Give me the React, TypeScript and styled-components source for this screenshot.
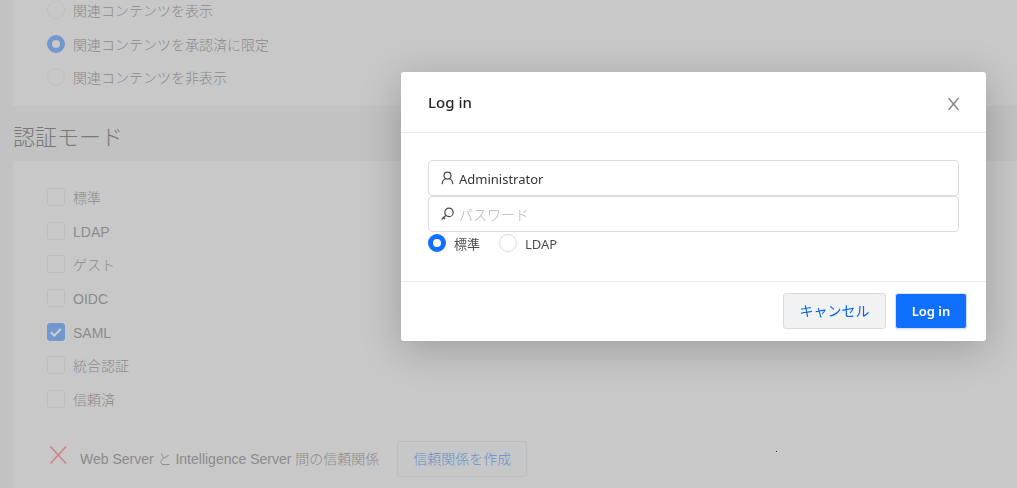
import React from "react";
import styled, { createGlobalStyle, css } from "styled-components";

const GlobalStyle = createGlobalStyle`
  *, *::before, *::after { box-sizing: border-box; }
  body {
    margin: 0;
    background: #c2c2c2;
    color: #8b8b8b;
    font-family: "Liberation Sans", "Noto Sans CJK JP", sans-serif;
    font-size: 14px;
    line-height: 20px;
  }
  button, input { font: inherit; }
`;

const Page = styled.main`
  min-height: 100vh;
  padding-left: 13px;
  overflow: hidden;
  display: flex;
  flex-direction: column;
`;

const Card = styled.section<{ $grow?: boolean }>`
  background: #c8c8c8;
  padding: ${(p) => (p.$grow ? "27px 34px 11px" : "1px 34px 20px")};
  flex: ${(p) => (p.$grow ? "1" : "none")};
`;

const Heading = styled.h2`
  margin: 0;
  height: 55px;
  padding-top: 16px;
  color: #76787b;
  font-size: 22px;
  font-weight: 300;
  line-height: 32px;
`;

const OptionList = styled.div<{ $height: number }>`
  display: grid;
  align-content: space-between;
  height: ${(p) => p.$height}px;
`;

const Option = styled.label<{ $gap?: number }>`
  display: flex;
  align-items: center;
  gap: ${(p) => p.$gap ?? 8}px;
  height: 18px;
`;

const OptionText = styled.span<{ $weight?: number }>`
  padding-top: 2px;
  font-weight: ${(p) => p.$weight ?? 300};
  white-space: nowrap;
`;

const Radio = styled.input<{ $muted?: boolean }>`
  appearance: none;
  flex: none;
  width: 18px;
  height: 18px;
  margin: 0;
  border: 1px solid ${(p) => (p.$muted ? "#bebebe" : "#dcdde0")};
  border-radius: 50%;
  &:checked {
    border: 5px solid ${(p) => (p.$muted ? "#7397cf" : "#0f6fff")};
  }
`;

const CheckFrame = styled.span`
  display: grid;
  flex: none;
  width: 18px;
  height: 18px;
  & > * { grid-area: 1 / 1; }
  svg { pointer-events: none; }
`;

const Checkbox = styled.input`
  appearance: none;
  width: 18px;
  height: 18px;
  margin: 0;
  border: 1px solid #bdbdbd;
  border-radius: 3px;
  &:checked {
    border-color: #7397cf;
    background: #7397cf;
  }
`;

const TrustRow = styled.div`
  display: flex;
  align-items: center;
  margin-top: 33px;
  white-space: nowrap;
`;

const TrustLabel = styled.span`
  margin: 0 18px 0 12px;
  font-weight: 300;
`;

const Speck = styled.span`
  width: 1px;
  height: 1px;
  margin: -16px 0 0 249px;
  background: #222222;
`;

const buttonKinds = {
  muted: css`
    width: 130px;
    color: #6c8fc8;
    background: #c6c7c8;
    border-color: #bdbdbe;
    font-weight: 300;
  `,
  plain: css`
    width: 103px;
    color: #0a64e6;
    background: #f1f2f4;
    border-color: #dadce0;
  `,
  primary: css`
    width: 72px;
    color: #ffffff;
    background: #0f6fff;
    border-color: #d3e2fa;
    font-size: 13px;
    font-weight: 600;
    box-shadow: 0 2px 2px rgba(0, 0, 0, 0.04);
  `,
};

const Button = styled.button<{ $kind: keyof typeof buttonKinds }>`
  height: 36px;
  padding: 0;
  border: 1px solid;
  border-radius: 3px;
  white-space: nowrap;
  cursor: pointer;
  ${(p) => buttonKinds[p.$kind]}
`;

const Overlay = styled.div`
  position: fixed;
  inset: 0;
  display: flex;
  justify-content: flex-end;
  align-items: flex-start;
  padding: 72px 31px;
`;

const Dialog = styled.form`
  width: 100%;
  max-width: 585px;
  border-radius: 3px;
  background: #ffffff;
  color: #4c4e52;
  font-family: "Noto Sans", "Noto Sans CJK JP", sans-serif;
  box-shadow: 0 8px 40px rgba(0, 0, 0, 0.22);
`;

const DialogHeader = styled.header`
  display: flex;
  align-items: center;
  justify-content: space-between;
  height: 61px;
  padding: 0 26px 0 27px;
  border-bottom: 1px solid #ebebec;
`;

const DialogTitle = styled.h1`
  margin: 0;
  color: #24262b;
  font-size: 15px;
  font-weight: 500;
`;

const CloseButton = styled.button`
  display: flex;
  padding: 0;
  margin-top: 4px;
  border: 0;
  background: none;
  color: #808287;
  cursor: pointer;
`;

const DialogBody = styled.div`
  padding: 27px 27px 29px;
`;

const Field = styled.label`
  display: flex;
  align-items: center;
  gap: 4px;
  height: 36px;
  padding: 0 12px;
  border: 1px solid #dcdde0;
  border-radius: 4px;
  color: #45474c;
  svg { flex: none; }
`;

const FieldInput = styled.input`
  flex: 1;
  min-width: 0;
  padding: 2px 0 0;
  border: 0;
  outline: 0;
  background: none;
  color: #35363c;
  font-size: 13px;
  &::placeholder {
    color: #b4b4b6;
    font-size: 14px;
    font-weight: 300;
    opacity: 1;
  }
`;

const ModeRow = styled.div`
  display: flex;
  gap: 19px;
  padding-top: 2px;
  font-size: 13px;
`;

const DialogFooter = styled.footer`
  display: flex;
  justify-content: flex-end;
  gap: 9px;
  padding: 11px 19px 12px;
  border-top: 1px solid #ebebec;
`;

const UserIcon = () => (
  <svg width="14" height="16" viewBox="0 0 14 16" fill="none" stroke="currentColor" strokeWidth="1.2" strokeLinecap="round" aria-hidden="true">
    <circle cx="6.5" cy="5.6" r="3.5" />
    <path d="M1.2 13.6C1.4 10.9 2.8 9.3 4.8 8.7M8.2 8.7C10.2 9.3 11.6 10.9 11.8 13.6" />
  </svg>
);

const KeyIcon = () => (
  <svg width="14" height="16" viewBox="0 0 14 16" fill="none" stroke="currentColor" strokeWidth="1.2" strokeLinecap="round" aria-hidden="true">
    <circle cx="8" cy="6.4" r="4.2" />
    <path d="M4.9 9.4L1.2 13M2.2 11.2L3.8 12.8" />
  </svg>
);

const contentOptions = [
  "関連コンテンツを表示",
  "関連コンテンツを承認済に限定",
  "関連コンテンツを非表示",
];

const authModes = ["標準", "LDAP", "ゲスト", "OIDC", "SAML", "統合認証", "信頼済"];

export default function App() {
  return (
    <>
      <GlobalStyle />
      <Page>
        <Card>
          <OptionList $height={85}>
            {contentOptions.map((text, i) => (
              <Option key={text}>
                <Radio $muted type="radio" name="content" defaultChecked={i === 1} />
                <OptionText>{text}</OptionText>
              </Option>
            ))}
          </OptionList>
        </Card>
        <Heading>認証モード</Heading>
        <Card $grow>
          <OptionList $height={220}>
            {authModes.map((mode) => (
              <Option key={mode}>
                <CheckFrame>
                  <Checkbox type="checkbox" defaultChecked={mode === "SAML"} />
                  {mode === "SAML" && (
                    <svg width="18" height="18" viewBox="0 0 18 18" fill="none" stroke="#d0d0d0" strokeWidth="2" aria-hidden="true">
                      <path d="M3.8 9.2L7.3 12.6L13.8 6" />
                    </svg>
                  )}
                </CheckFrame>
                <OptionText>{mode}</OptionText>
              </Option>
            ))}
          </OptionList>
          <TrustRow>
            <svg width="21" height="26" viewBox="0 0 21 26" fill="none" stroke="#cb8585" strokeWidth="1.6" aria-hidden="true">
              <path d="M3.5 0.5L19 17.5M19 0.5L3.5 17.5" />
            </svg>
            <TrustLabel>Web Server と Intelligence Server 間の信頼関係</TrustLabel>
            <Button $kind="muted" type="button">信頼関係を作成</Button>
            <Speck />
          </TrustRow>
        </Card>
      </Page>
      <Overlay>
        <Dialog role="dialog" aria-labelledby="login-title" onSubmit={(e) => e.preventDefault()}>
          <DialogHeader>
            <DialogTitle id="login-title">Log in</DialogTitle>
            <CloseButton type="button" aria-label="Close">
              <svg width="13" height="14" viewBox="0 0 13 14" fill="none" stroke="currentColor" strokeWidth="1.3" aria-hidden="true">
                <path d="M1.5 1L11.5 13M11.5 1L1.5 13" />
              </svg>
            </CloseButton>
          </DialogHeader>
          <DialogBody>
            <Field>
              <UserIcon />
              <FieldInput type="text" aria-label="User name" defaultValue="Administrator" />
            </Field>
            <Field>
              <KeyIcon />
              <FieldInput type="password" aria-label="パスワード" placeholder="パスワード" />
            </Field>
            <ModeRow>
              <Option>
                <Radio type="radio" name="mode" defaultChecked />
                <OptionText $weight={400}>標準</OptionText>
              </Option>
              <Option>
                <Radio type="radio" name="mode" />
                <OptionText $weight={400}>LDAP</OptionText>
              </Option>
            </ModeRow>
          </DialogBody>
          <DialogFooter>
            <Button $kind="plain" type="button">キャンセル</Button>
            <Button $kind="primary" type="submit">Log in</Button>
          </DialogFooter>
        </Dialog>
      </Overlay>
    </>
  );
}
